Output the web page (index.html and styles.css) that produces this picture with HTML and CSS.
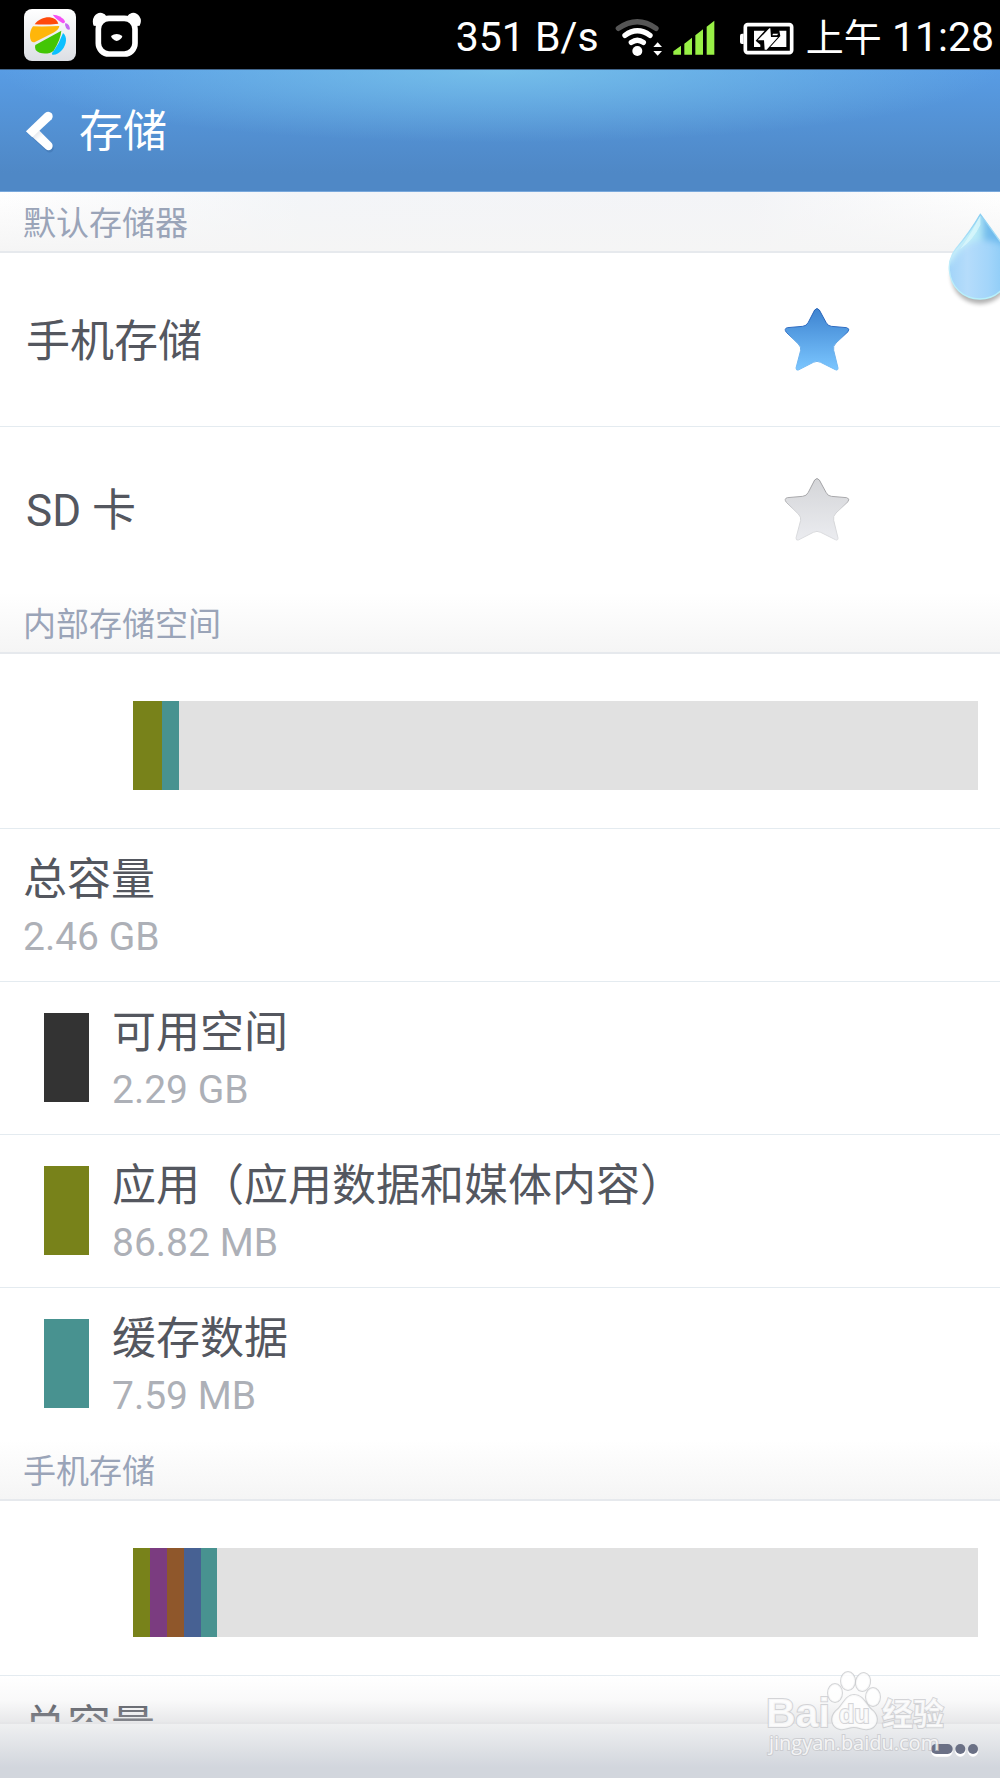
FILE: index.html
```html
<!DOCTYPE html>
<html lang="zh-CN">
<head>
<meta charset="utf-8">
<meta name="viewport" content="width=device-width, initial-scale=1">
<title>存储</title>
<link rel="stylesheet" href="styles.css">
</head>
<body>
<div class="screen">
  <div class="status">
    <svg class="status-app" width="52" height="52" viewBox="72 27 156 156" aria-hidden="true">
      <defs>
        <linearGradient id="tile" x1="0" y1="0" x2="0" y2="1"><stop offset="0" stop-color="#fff"/><stop offset="1" stop-color="#dcdfe4"/></linearGradient>
      </defs>
      <rect x="72" y="27" width="156" height="156" rx="24" fill="url(#tile)"/>
      <path d="M104 73C116 57 133 51 149 52C163 54 172 60 175 71Q140 75 104 73Z" fill="#ff4a0c"/>
      <path d="M99 79Q140 80 178 78Q176 90 160 98L105 126Q94 129 91 116C88 102 92 88 99 79Z" fill="#ffb60a"/>
      <path d="M106 135L184 92Q182 118 161 152C148 164 118 164 107 150Q103 142 106 135Z" fill="#43c605"/>
      <path d="M189 99C203 110 200 134 186 150C177 160 166 166 157 164Q153 161 161 153Q178 130 189 99Z" fill="#0cc0ff"/>
      <path d="M158 44Q183 44 195 64Q195 72 187 69Q167 57 158 44Z" fill="#f451f5"/>
      <path d="M196 69Q209 72 210 88Q203 92 198 83Q193 74 196 69Z" fill="#c56bf2"/>
    </svg>
    <svg class="status-bear" width="50" height="46" viewBox="276 38 150 138" aria-hidden="true">
      <rect x="295" y="57" width="110" height="107" rx="32" fill="none" stroke="#fff" stroke-width="17"/>
      <path d="M281 79Q275 64 283 51Q292 38 306 41Q316 43 319 51L292 80ZM419 79Q427 64 418 51Q409 38 395 41Q386 43 382 51L409 80Z" fill="#fff"/>
      <path d="M333 110Q350 98 367 110Q365 121 350 125Q336 121 333 110Z" fill="#fff"/>
    </svg>
    <span class="status-text speed">351 B/s</span>
    <svg class="wifi" width="48" height="40" viewBox="530 48 144 120" aria-hidden="true">
      <g fill="none" stroke-linecap="round" stroke-width="16">
        <path d="M540 82Q597 42 653 82" stroke="#555"/>
        <path d="M560 103Q597 76 635 103" stroke="#fff"/>
        <path d="M579 124Q597 111 615 124" stroke="#fff"/>
      </g>
      <circle cx="597" cy="150" r="15" fill="#fff"/>
      <path d="M645 138L658 124L671 138ZM645 150L658 164L671 150Z" fill="#fff"/>
    </svg>
    <svg class="signal" width="42" height="35" viewBox="704 60 126 105" aria-hidden="true">
      <path d="M705 164V154L728 137V164ZM738 164V131L761 113V164ZM771 164V106L794 88V164ZM805 164V80L828 62V164Z" fill="#98f046"/>
    </svg>
    <svg class="battery" width="55" height="34" viewBox="60 66 165 102" aria-hidden="true">
      <rect x="79" y="74" width="139" height="84" rx="7" fill="none" stroke="#fff" stroke-width="11"/>
      <path d="M74 101H69Q63 101 63 107V126Q63 132 69 132H74Z" fill="#fff"/>
      <path d="M105 92H137L110 122L124 134V141H105Z" fill="#fff"/>
      <path d="M181 92H202V141H154L184 108Z" fill="#fff"/>
      <path d="M151 85L116 121H135L137 149H143L177 111H156L154 85Z" fill="#fff"/>
      <path d="M162 101H178L174 106H160Z" fill="#fff"/>
    </svg>
    <span class="status-text clock"><span class="period">上午</span> 11:28</span>
  </div>

  <header class="header">
    <button class="back" type="button" aria-label="返回">
      <svg width="30" height="44" viewBox="76 328 90 132" aria-hidden="true">
        <defs><linearGradient id="arm" x1="0" y1="0" x2="1" y2="1"><stop offset=".1" stop-color="#ccd2dc"/><stop offset=".5" stop-color="#fff"/></linearGradient></defs>
        <path d="M86 396L138 445Q147 453 156 444Q162 436 156 427L118 387Z" fill="#27548b" opacity=".25" transform="translate(3 7)"/>
        <path d="M79 392L138 445Q147 453 156 444Q162 436 156 427L112 383Z" fill="url(#arm)"/>
        <path d="M79 392L136 337Q147 329 156 338Q162 347 156 356L98 410Z" fill="#fff"/>
      </svg>
    </button>
    <h1 class="title">存储</h1>
  </header>

  <main class="content">
    <section>
      <h2 class="section-title first">默认存储器</h2>
      <label class="choice">
        <span class="name">手机存储</span>
        <input class="choice-input" type="radio" name="default-storage" checked>
        <svg class="star" width="66" height="65" viewBox="131 354 198 195" aria-hidden="true">
          <defs>
            <linearGradient id="star-fill-on" x1="0" y1="0" x2="0" y2="1"><stop offset="0" stop-color="#3d83d0"/><stop offset="1" stop-color="#7bc6ff"/></linearGradient>
            <linearGradient id="star-edge-on" x1="0" y1="0" x2="0" y2="1"><stop offset="0" stop-color="#2561b6"/><stop offset=".4" stop-color="#316fc5"/><stop offset=".5" stop-color="#62a5e4"/><stop offset="1" stop-color="#76bdf6"/></linearGradient>
          </defs>
          <path d="M223 363Q230 354 237 363L257 400Q262 411 273 412L319 416Q330 419 323 428L287 462Q277 471 280 484L293 537Q293 546 285 542L241 520Q230 514 219 520L174 543Q167 545 167 537L181 484Q183 474 174 465L138 430Q130 419 141 416L187 412Q199 411 204 400Z" fill="url(#star-fill-on)" stroke="url(#star-edge-on)" stroke-width="3"/>
        </svg>
      </label>
      <label class="choice last">
        <span class="name">SD 卡</span>
        <input class="choice-input" type="radio" name="default-storage">
        <svg class="star" width="66" height="65" viewBox="131 354 198 195" aria-hidden="true">
          <defs>
            <linearGradient id="star-fill-off" x1="0" y1="0" x2="0" y2="1"><stop offset="0" stop-color="#d4d5d8"/><stop offset="1" stop-color="#ebecf0"/></linearGradient>
            <linearGradient id="star-edge-off" x1="0" y1="0" x2="0" y2="1"><stop offset="0" stop-color="#a0a0a3"/><stop offset=".35" stop-color="#aaaaad"/><stop offset=".5" stop-color="#d0d1d4"/><stop offset="1" stop-color="#dcdde0"/></linearGradient>
          </defs>
          <path d="M223 363Q230 354 237 363L257 400Q262 411 273 412L319 416Q330 419 323 428L287 462Q277 471 280 484L293 537Q293 546 285 542L241 520Q230 514 219 520L174 543Q167 545 167 537L181 484Q183 474 174 465L138 430Q130 419 141 416L187 412Q199 411 204 400Z" fill="url(#star-fill-off)" stroke="url(#star-edge-off)" stroke-width="3"/>
        </svg>
      </label>
    </section>

    <section>
      <h2 class="section-title">内部存储空间</h2>
      <div class="usage">
        <div class="usage-bar" role="img" aria-label="内部存储空间用量">
          <span class="apps" style="width:3.4%"></span>
          <span class="cache" style="width:2%"></span>
        </div>
      </div>
      <ul class="list">
        <li class="item"><span class="text"><span class="name">总容量</span><span class="size">2.46 GB</span></span></li>
        <li class="item keyed"><span class="swatch free"></span><span class="text"><span class="name">可用空间</span><span class="size">2.29 GB</span></span></li>
        <li class="item keyed"><span class="swatch apps"></span><span class="text"><span class="name">应用（应用数据和媒体内容）</span><span class="size">86.82 MB</span></span></li>
        <li class="item keyed"><span class="swatch cache"></span><span class="text"><span class="name">缓存数据</span><span class="size">7.59 MB</span></span></li>
      </ul>
    </section>

    <section>
      <h2 class="section-title">手机存储</h2>
      <div class="usage">
        <div class="usage-bar" role="img" aria-label="手机存储用量">
          <span class="apps" style="width:2%"></span>
          <span class="pictures" style="width:2%"></span>
          <span class="audio" style="width:2%"></span>
          <span class="downloads" style="width:2%"></span>
          <span class="cache" style="width:2%"></span>
        </div>
      </div>
      <ul class="list">
        <li class="item"><span class="text"><span class="name">总容量</span></span></li>
      </ul>
    </section>
  </main>

  <footer class="toolbar">
    <button class="menu" type="button" aria-label="菜单">
      <svg width="50" height="16" viewBox="570 310 150 48" aria-hidden="true">
        <g fill="#fff"><rect x="573" y="319" width="65" height="32" rx="16"/><circle cx="661" cy="335" r="16"/><circle cx="699" cy="335" r="16"/></g>
        <g fill="#6a7085"><rect x="573" y="313" width="65" height="30" rx="15"/><circle cx="661" cy="328" r="15"/><circle cx="699" cy="328" r="15"/></g>
      </svg>
    </button>
  </footer>

  <svg class="drop" width="54" height="100" viewBox="618 66 162 300" aria-hidden="true">
    <defs>
      <linearGradient id="drop-fill" x1="0" y1="0" x2="1" y2="0"><stop offset="0" stop-color="#9fd3f8"/><stop offset=".3" stop-color="#b5dcfb"/><stop offset=".6" stop-color="#a3d5fa"/><stop offset="1" stop-color="#7cc5f4"/></linearGradient>
      <linearGradient id="drop-top" x1="0" y1="0" x2="1" y2="0"><stop offset="0" stop-color="#d4f6fb"/><stop offset=".48" stop-color="#b4e9f7"/><stop offset=".56" stop-color="#75bdec"/><stop offset="1" stop-color="#64b5ee"/></linearGradient>
      <linearGradient id="drop-rim" x1="0" y1="0" x2="0" y2="1"><stop offset="0" stop-color="#8bcff2"/><stop offset=".5" stop-color="#bfeafa"/><stop offset="1" stop-color="#b6f0fa"/></linearGradient>
      <filter id="soft" x="-20%" y="-20%" width="140%" height="140%"><feGaussianBlur stdDeviation="7"/></filter>
      <filter id="blend" x="-20%" y="-20%" width="140%" height="140%"><feGaussianBlur stdDeviation="9"/></filter>
      <clipPath id="drop-shape"><path d="M721 73Q690 126 648 176C630 200 626 220 628 240C632 292 670 327 720 327C770 327 808 288 812 240C814 210 803 186 788 164Q750 112 721 73Z"/></clipPath>
    </defs>
    <ellipse cx="720" cy="258" rx="86" ry="84" fill="#000" opacity=".3" filter="url(#soft)"/>
    <g clip-path="url(#drop-shape)">
      <path d="M618 66H830V340H618Z" fill="url(#drop-fill)"/>
      <path d="M618 60H830V180Q770 150 721 150Q660 160 630 220H618Z" fill="url(#drop-top)" filter="url(#blend)"/>
      <path d="M721 73Q702 120 660 178Q700 150 721 105Z" fill="#e5fbfd" opacity=".6"/>
    </g>
    <path d="M721 73Q690 126 648 176C630 200 626 220 628 240C632 292 670 327 720 327C770 327 808 288 812 240C814 210 803 186 788 164Q750 112 721 73Z" fill="none" stroke="url(#drop-rim)" stroke-width="4"/>
  </svg>

  <svg class="watermark" width="184" height="90" viewBox="0 0 184 90" role="img" aria-label="Baidu 经验 jingyan.baidu.com">
    <g class="mark">
      <text class="mark-latin" x="3" y="57">Bai</text>
      <text class="mark-cjk" x="119" y="55">经验</text>
      <ellipse cx="72" cy="23" rx="7" ry="9"/>
      <ellipse cx="85" cy="11" rx="7" ry="9"/>
      <ellipse cx="100" cy="12" rx="7" ry="9" transform="rotate(12 100 12)"/>
      <ellipse cx="110" cy="27" rx="7" ry="9"/>
      <path d="M91 25C101 25 103 36 110 41C117 48 114 58 105 59C99 60 96 57 91 57C86 57 82 60 77 59C68 57 67 47 73 41C80 36 82 25 91 25Z"/>
      <text class="mark-du" x="76" y="53">du</text>
      <text class="mark-url" x="6" y="80">jingyan.baidu.com</text>
    </g>
  </svg>
</div>
</body>
</html>
```
FILE: styles.css
```css
* {
  box-sizing: border-box;
}

body {
  margin: 0;
  background: #fff;
  color: #54575f;
  font-family: Roboto, "Noto Sans CJK SC", sans-serif;
}

h1,
h2,
ul {
  margin: 0;
  padding: 0;
  font-weight: 400;
}

button {
  display: flex;
  padding: 0;
  border: 0;
  background: none;
}

svg {
  display: block;
  flex: none;
}

.screen {
  position: relative;
  display: flex;
  flex-direction: column;
  height: 100vh;
  overflow: hidden;
}

/* Status bar */
.status {
  display: flex;
  flex: none;
  align-items: center;
  height: 69px;
  padding: 0 6px 0 24px;
  background: #000;
  color: #fff;
}

.status-bear {
  margin-left: 16px;
}

.status-text {
  padding-top: 5px;
  font-size: 41px;
  line-height: 48px;
  white-space: nowrap;
}

.speed {
  margin-left: auto;
}

.wifi {
  margin: 4px 0 0 16px;
}

.signal {
  margin: 6px 0 0 10px;
}

.battery {
  margin: 8px 12px 0 24px;
}

.period {
  font-size: 38px;
}

/* Title bar */
.header {
  display: flex;
  flex: none;
  align-items: center;
  gap: 24px;
  height: 123px;
  padding: 2px 25px 0;
  border-top: 1px solid #41648a;
  border-bottom: 1px solid #78a8dc;
  background:
    radial-gradient(ellipse 50% 60% at 50% 0, rgba(128, 204, 236, 0.7), rgba(110, 184, 236, 0)),
    linear-gradient(#589ce4, #4f88c6 85%);
  color: #fff;
}

.title {
  font-size: 44px;
  line-height: 64px;
}

/* Settings list */
.content {
  position: relative;
  flex: 1;
  min-height: 0;
  overflow-y: auto;
  scrollbar-width: none;
}

.section-title {
  height: 61px;
  padding: 8px 23px 0;
  border-bottom: 2px solid #e6e9ed;
  background: linear-gradient(#fff, #f5f5f5);
  color: #9aa4b8;
  font-size: 33px;
  line-height: 48px;
}

.first {
  background:
    linear-gradient(rgba(245, 245, 245, 0), #f5f5f5),
    linear-gradient(90deg, #fff, #f3f5f8 30%, #f3f4f7 75%, #fff);
}

.choice {
  display: flex;
  align-items: center;
  justify-content: space-between;
  height: 174px;
  padding: 0 150px 0 26px;
  border-bottom: 1px solid #e4ebf0;
}

.choice.last {
  height: 166px;
  padding-bottom: 2px;
  border-bottom: 0;
}

.choice-input {
  position: absolute;
  opacity: 0;
}

.name {
  font-size: 44px;
  line-height: 56px;
}

.choice .name {
  padding-top: 4px;
}

.size {
  color: #adb0b7;
  font-size: 39px;
  line-height: 58px;
}

.usage {
  height: 175px;
  padding: 47px 22px 0 133px;
  border-bottom: 1px solid #e4ebf0;
}

.usage-bar {
  display: flex;
  height: 89px;
  background: #e1e1e1;
}

.list {
  list-style: none;
}

.item {
  display: flex;
  gap: 23px;
  height: 153px;
  padding: 23px 23px 0;
  border-bottom: 1px solid #e4ebf0;
}

.item:last-child {
  height: 152px;
  border-bottom: 0;
}

.keyed {
  padding-left: 44px;
}

.text {
  display: flex;
  flex-direction: column;
}

.swatch {
  width: 45px;
  height: 89px;
  margin-top: 8px;
}

.free { background: #333; }
.apps { background: #78821a; }
.cache { background: #489290; }
.pictures { background: #7b3c80; }
.audio { background: #8f572b; }
.downloads { background: #476193; }

/* Bottom toolbar, with the shade it casts on the list */
.toolbar {
  position: relative;
  display: flex;
  flex: none;
  align-items: center;
  justify-content: flex-end;
  height: 56px;
  padding: 0 20px 0 0;
  border-top: 2px solid #fbfbfc;
  background: linear-gradient(#eff0f1, #d2d6dd 80%);
}

.toolbar::before {
  position: absolute;
  right: 0;
  bottom: 100%;
  left: 0;
  height: 48px;
  background: linear-gradient(rgba(200, 201, 205, 0), rgba(200, 201, 205, 0.1) 50%, rgba(200, 201, 205, 0.45));
  content: "";
}

/* Floating overlays */
.drop {
  position: absolute;
  top: 212px;
  right: 0;
}

.watermark {
  position: absolute;
  right: 53px;
  bottom: 18px;
}

.mark {
  fill: rgba(255, 255, 255, 0.8);
  stroke: rgba(195, 196, 200, 0.7);
  stroke-width: 2px;
  paint-order: stroke;
}

.mark-latin {
  font: 700 41px "Liberation Sans", sans-serif;
}

.mark-cjk {
  font: 700 31px "Noto Sans CJK SC", sans-serif;
}

.mark-du {
  font: 700 25px "Liberation Sans", sans-serif;
}

.mark-url {
  font: 400 20px "Open Sans", sans-serif;
}
```
